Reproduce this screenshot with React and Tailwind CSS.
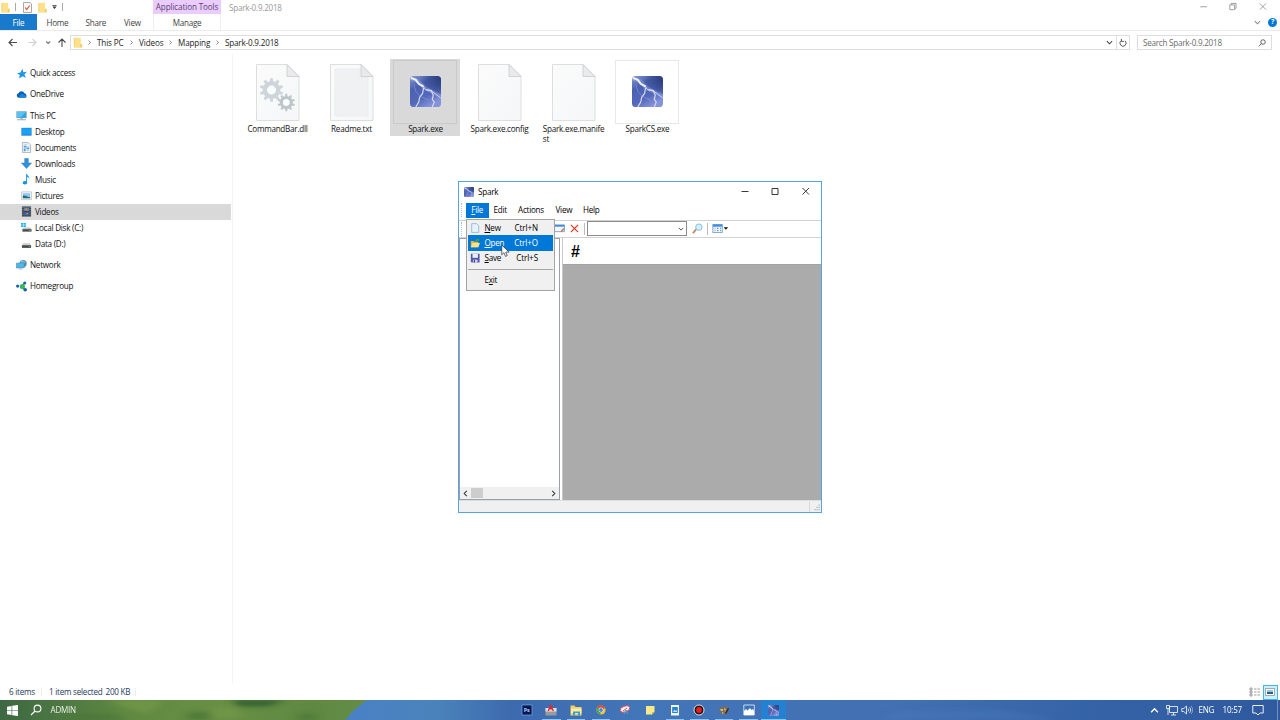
import clsx from 'clsx';

function Folder({ className }) {
  return (
    <svg viewBox="0 0 10 12" className={clsx('shrink-0', className)}>
      <path d="M.5 1h7v6.500h2v4H.5z" fill="#f6d87c" />
      <path d="M1 .8h6.800v10.400H1z" fill="#fee08a" />
      <path d="M8 7.500h1.400v3.700H7.400z" fill="#efca66" />
      <path d="M1 .8v10.400" stroke="#edc964" strokeWidth=".5" />
    </svg>
  );
}

function Chevron({ className, dir = 'down' }) {
  const paths = { down: 'M1 2.5 4 5.5 7 2.5', right: 'M2.5 1 5.5 4 2.5 7', left: 'M5.5 1 2.5 4 5.5 7', up: 'M1 5.5 4 2.5 7 5.5' };
  return (
    <svg viewBox="0 0 8 8" className={clsx('shrink-0', className)} fill="none" stroke="currentColor" strokeWidth="1.2">
      <path d={paths[dir]} />
    </svg>
  );
}

function Search({ className }) {
  return (
    <svg viewBox="0 0 12 12" className={clsx('shrink-0', className)} fill="none" stroke="currentColor" strokeWidth="1.1">
      <circle cx="7.5" cy="4.5" r="3.4" />
      <path d="M5.1 7 1 11" />
    </svg>
  );
}

function SparkIcon({ className }) {
  return (
    <svg viewBox="0 0 32 32" className={clsx('shrink-0', className)}>
      <defs>
        <linearGradient id="sparkBg" x1="0" y1="0" x2=".6" y2="1">
          <stop offset="0" stopColor="#8698d2" />
          <stop offset=".35" stopColor="#4b61ae" />
          <stop offset=".7" stopColor="#5468ba" />
          <stop offset="1" stopColor="#8593da" />
        </linearGradient>
        <radialGradient id="sparkDark" cx="1" cy=".1" r=".65">
          <stop offset="0" stopColor="#2a3d7c" />
          <stop offset="1" stopColor="#2a3d7c" stopOpacity="0" />
        </radialGradient>
        <clipPath id="sparkClip"><rect width="32" height="32" rx="4" /></clipPath>
      </defs>
      <g clipPath="url(#sparkClip)" fill="none">
        <path d="M0 0h32v32H0z" fill="url(#sparkBg)" />
        <path d="M0 0h32v32H0z" fill="url(#sparkDark)" />
        <path d="m0 2 8 3 8 8 16 8" stroke="#a9baf0" strokeWidth="4" opacity=".35" />
        <path d="m1 2 5 2 3 4 5 3 2 3 7 2 4 3 5 4" stroke="#c9d4fa" strokeWidth="1" />
        <path d="m1 2 5 2 3 4 5 3" stroke="#eef2ff" strokeWidth="2" />
        <path d="m14 12-1 6-3 4-1 5-3 5M17 14l5 1 2 5-1 4 2 3-2 5" stroke="#d6dcfb" strokeWidth="1.2" />
        <path d="m4 9 2 7 5 5 8 4" stroke="#8d9fe0" strokeWidth=".6" />
      </g>
    </svg>
  );
}

const TEETH = [0, 36, 72, 108, 144, 180, 216, 252, 288, 324];

function Gear({ x, y, s, color }) {
  return (
    <g transform={`translate(${x} ${y}) scale(${s})`}>
      {TEETH.map((a) => (
        <path key={a} d="M-1.7-8.5-1.3-12h2.6l.4 3.5z" fill={color} transform={`rotate(${a})`} />
      ))}
      <circle r="6.8" fill="none" stroke={color} strokeWidth="4.6" />
      <circle r="4.4" fill="#fbfcfc" />
    </g>
  );
}

function FilePage({ kind }) {
  return (
    <svg viewBox="0 0 44 57" className="ml-px mt-px h-[57px] w-[44px]">
      <defs>
        <linearGradient id="page" x1="0" y1="0" x2="1" y2="1">
          <stop offset="0" stopColor="#fbfbfb" />
          <stop offset="1" stopColor="#f5f7f8" />
        </linearGradient>
      </defs>
      <path d="M.5.5H31L43 12.500V56.500H.5z" fill="url(#page)" stroke="#d5d6d7" strokeWidth=".8" />
      {kind === 'text' && <path d="M5 5h25v8h8v39H5z" fill="#eff1f2" stroke="#e3e5e6" strokeWidth=".5" />}
      <path d="M31 .5v12h12z" fill="#e9eaeb" stroke="#cbcccd" strokeWidth=".8" />
      {kind === 'gears' && (
        <>
          <Gear x={15.5} y={26} s={0.98} color="#cdd5da" />
          <Gear x={30.3} y={38.5} s={0.72} color="#bcc6cb" />
        </>
      )}
    </svg>
  );
}

const navIcons = {
  star: <path d="m7 .8 1.100 3.700 3.800-.5-2.700 3 1.600 3.800-3.500-1.800L3.400 11.500l.7-3.900-3-2 3.700-.6z" fill="#2196e8" />,
  cloud: (
    <>
      <path d="M3 9.500a2.500 2.500 0 0 1-.3-4.900A3.600 3.600 0 0 1 9.300 4.600 2.500 2.500 0 0 1 9.500 9.500z" fill="#0a61b9" />
      <path d="M5 9.600a2.200 2.200 0 0 1 1-4c1.600-.5 2.500.6 3 1.400 1.500-.4 2.500.6 2.400 2.600z" fill="#1687d9" />
    </>
  ),
  pc: (
    <>
      <path d="M.5 1.500h11v7.300H.5z" fill="#6b8ea3" />
      <path d="M1 2h10v6.200H1z" fill="#59c2f5" />
      <path d="M11 2v6.200H5z" fill="#2da4e5" />
      <path d="M4.500 9h3v1h-3zM1 10h10v1.200H1z" fill="#a4b0b8" />
    </>
  ),
  desktop: (
    <>
      <path d="M.5 2h11v8.500H.5z" fill="#1576c6" />
      <path d="M1 2.500h10v7H1z" fill="#19a2f5" />
    </>
  ),
  documents: (
    <>
      <path d="M1.500.5h6.300L10.500 3v8.500h-9z" fill="#f2f5f7" stroke="#8798a3" strokeWidth=".7" />
      <path d="M3 4h3v2H3zM6 6h3v2H6zM3 7h2v3H3z" fill="#519bd0" />
      <path d="M3 2.500h4M7 4.800h2M6 9.300h3" stroke="#95b5cb" strokeWidth=".6" />
    </>
  ),
  downloads: <path d="M4 .5h4v5h3.500L6 11.500.5 5.500H4z" fill="#318fe0" stroke="#2576bd" strokeWidth=".5" />,
  music: (
    <>
      <path d="M5.600 0h1c.2 2 3 2.600 2.700 5.600-.4-1.600-1.500-2-2.700-2.200V9h-1z" fill="#1192ee" />
      <ellipse cx="4.300" cy="9.500" rx="2.500" ry="1.900" fill="#1192ee" />
    </>
  ),
  pictures: (
    <>
      <path d="M.5 2h11v8.500H.5z" fill="#f4f6f7" stroke="#a1abb2" strokeWidth=".6" />
      <path d="M2 3.500h8v5.500H2z" fill="#8bcaf3" />
      <path d="M2 9V6l3 .3 3 1.200 2 .2V9z" fill="#2f6673" />
    </>
  ),
  videos: (
    <>
      <path d="M1 .5h10v11H1z" fill="#3b3e43" />
      <path d="M3 1.500h6v4H3z" fill="#4a82c5" />
      <path d="M3 6.500h6v4H3z" fill="#3261a5" />
      <path d="m4 4 2-2 2 3H5zM5 9l2-2 1 2z" fill="#d38244" />
      <path d="M2 1.200v10M10 1.200v10" stroke="#b7babf" strokeWidth=".8" strokeDasharray="1 1" />
    </>
  ),
  diskC: (
    <>
      <path d="M0 1h2.300v2H0zm2.800 0h2.500v2H2.800zM0 3.500h2.300v2H0zm2.800 0h2.500v2H2.800z" fill="#1cb2ee" />
      <path d="m3 6-1.500 2h10L10 6z" fill="#c4c6c8" />
      <path d="M1.500 7.800h10v2.700h-10z" fill="#484b4d" />
      <path d="M9 9h1.500v.7H9z" fill="#69d67b" />
    </>
  ),
  diskD: (
    <>
      <path d="M2.500 5.500 1 8h10L9.500 5.500z" fill="#d2d4d5" />
      <path d="M1 7.800h10v3H1z" fill="#494b4d" />
      <path d="M8.500 9.100H10v.7H8.500z" fill="#69d67b" />
    </>
  ),
  network: (
    <>
      <circle cx="7.800" cy="5" r="3.900" fill="#4f8fb0" />
      <path d="M5 2.500c2-2 4 0 5.500 1l-2 2-3-1z" fill="#7cc1da" />
      <path d="m.5 4.500 8.500-.5v5.500l-8.500.3z" fill="#4ab9ee" stroke="#4d7793" strokeWidth=".6" />
      <path d="M3 10.500h4v.8H3z" fill="#83a0b1" />
    </>
  ),
  homegroup: (
    <>
      <path d="m4 6 5-4v8z" fill="#2ebc58" />
      <circle cx="7" cy="6" r="2.800" fill="#37b75a" />
      <circle cx="1.800" cy="5.500" r="1.800" fill="#1d67b2" />
      <circle cx="9.500" cy="2.200" r="1.700" fill="#1c5da8" />
      <circle cx="10" cy="9.500" r="2" fill="#1760a9" />
    </>
  ),
};

const nav = [
  { icon: 'star', label: 'Quick access', cls: 'pl-4' },
  { icon: 'cloud', label: 'OneDrive', cls: 'pl-4 mt-[5.300px]' },
  { icon: 'pc', label: 'This PC', cls: 'pl-4 mt-[5.300px]' },
  { icon: 'desktop', label: 'Desktop', cls: 'pl-[21px]' },
  { icon: 'documents', label: 'Documents', cls: 'pl-[21px]' },
  { icon: 'downloads', label: 'Downloads', cls: 'pl-[21px]' },
  { icon: 'music', label: 'Music', cls: 'pl-[21px]' },
  { icon: 'pictures', label: 'Pictures', cls: 'pl-[21px]' },
  { icon: 'videos', label: 'Videos', cls: 'pl-[21px] bg-[#d9d9d9]' },
  { icon: 'diskC', label: 'Local Disk (C:)', cls: 'pl-[21px]' },
  { icon: 'diskD', label: 'Data (D:)', cls: 'pl-[21px]' },
  { icon: 'network', label: 'Network', cls: 'pl-4 mt-[5.300px]' },
  { icon: 'homegroup', label: 'Homegroup', cls: 'pl-4 mt-[5.300px]' },
];

function TitleBar() {
  return (
    <header className="flex h-[31px] border-b border-[#ebebeb]">
      <div className="flex w-[153px] flex-col">
        <div className="flex h-[15px] items-center">
          <Folder className="ml-px h-[11px] w-[9px]" />
          <i className="ml-[5px] h-2 w-px bg-[#aaa]" />
          <svg viewBox="0 0 9 11" className="ml-[7px] h-[11px] w-[9px]">
            <path d="M.5.500H7L8.500 2v8.500h-8z" fill="#f8f8f8" stroke="#969696" strokeWidth=".8" />
            <path d="m2.200 5.500 1.500 2 3-4" fill="none" stroke="#dc572c" strokeWidth="1.200" />
          </svg>
          <Folder className="ml-[6px] h-[11px] w-[9px]" />
          <svg viewBox="0 0 6 6" className="ml-[5px] h-[6px] w-[5px]">
            <path d="M.5.500h5v1h-5zM.5 2.500h5L3 5.500z" fill="#333" />
          </svg>
          <i className="ml-[4.500px] h-2 w-px bg-[#aaa]" />
        </div>
        <nav className="flex h-4 items-center">
          <span className="flex h-4 w-[37px] items-center justify-center bg-[#1979ca] pt-px text-white">File</span>
          <span className="ml-[9.500px] w-[39px] pt-px text-[#444]">Home</span>
          <span className="w-[38.500px] pt-px text-[#444]">Share</span>
          <span className="pt-px text-[#444]">View</span>
        </nav>
      </div>
      <div className="flex w-[68px] flex-col border-x border-[#eee] text-center">
        <span className="-mx-px h-[15px] bg-[#eaccff] leading-[13.500px] tracking-[-0.120px] text-[#5c436d]">Application Tools</span>
        <span className="pt-px leading-[15px] text-[#444]">Manage</span>
      </div>
      <div className="ml-2 flex-1 leading-[15px] text-[#999]">Spark-0.9.2018</div>
      <div className="flex w-[84px] flex-col text-[#888]">
        <svg viewBox="0 0 84 15" className="h-[15px] w-[84px]" fill="none" stroke="currentColor" strokeWidth=".8">
          <path d="M3 7h7M64.500 3.500l6.500 6.500M71 3.500 64.500 10M33.500 5h5v5h-5zM35 5V3.500h5v5h-1.500" />
        </svg>
        <div className="flex h-4 items-center justify-end gap-[7px] pr-[3px]">
          <Chevron className="h-[7px] w-[7px]" />
          <span className="flex h-[9px] w-[9px] items-center justify-center rounded-full bg-[#0078d7] text-[7px] font-bold text-white">?</span>
        </div>
      </div>
    </header>
  );
}

function AddressBar() {
  return (
    <div className="flex h-[23px] items-center text-[#222]">
      <svg viewBox="0 0 70 16" className="h-4 w-[70px]" fill="none" strokeWidth="1.100">
        <path d="M17 7.500H9.500M12.500 4 9 7.500l3.500 3.500M58.500 7.500 62 4l3.500 3.500M62 4v8" stroke="#4b4b4b" />
        <path d="M28.500 7.500H36M32.500 4 36 7.500l-3.500 3.500" stroke="#d1d1d1" />
        <path d="m46.200 6.500 2 2 2-2" stroke="#777" />
      </svg>
      <div className="flex h-[15px] w-[1060px] items-center border border-[#dedede] tracking-[-0.120px]">
        <Folder className="ml-[2px] h-[11px] w-[10px]" />
        <Chevron dir="right" className="ml-[4px] mr-[5px] h-[5px] w-[5px] text-[#555]" />
        <span className="w-[32px]">This PC</span>
        <Chevron dir="right" className="mr-[5px] h-[5px] w-[5px] text-[#555]" />
        <span className="w-[28.500px]">Videos</span>
        <Chevron dir="right" className="mr-[5.500px] h-[5px] w-[5px] text-[#555]" />
        <span className="w-[37px]">Mapping</span>
        <Chevron dir="right" className="mr-[5px] h-[5px] w-[5px] text-[#555]" />
        <span className="flex-1 tracking-[-0.180px]">Spark-0.9.2018</span>
        <Chevron className="mr-[2.500px] h-[7px] w-[7px] text-[#444]" />
        <span className="flex h-full w-[13.500px] items-center justify-center border-l border-[#dedede]">
          <svg viewBox="0 0 10 10" className="h-[8px] w-[8px]" fill="none" stroke="#555" strokeWidth="1.200">
            <path d="M7.500 2.300A3.800 3.800 0 1 1 3 2M3 0v3h3" />
          </svg>
        </span>
      </div>
      <div className="ml-[7px] flex h-[15px] w-[135px] items-center justify-between border border-[#dedede] pl-[5px] pr-[5px] text-[#6b6b6b]">
        <span>Search Spark-0.9.2018</span>
        <Search className="h-[8px] w-[8px] text-[#333]" />
      </div>
    </div>
  );
}

function Sidebar() {
  return (
    <aside className="mr-px w-[231px] pt-[11px]">
      {nav.map((n) => (
        <div key={n.label} className={clsx('flex h-4 items-center', n.cls)}>
          <svg viewBox="0 0 12 12" className="h-[11px] w-[11px] shrink-0">{navIcons[n.icon]}</svg>
          <span className="ml-[3px] leading-[11px] pb-px">{n.label}</span>
        </div>
      ))}
    </aside>
  );
}

const files = [
  { name: 'CommandBar.dll', kind: 'gears' },
  { name: 'Readme.txt', kind: 'text' },
  { name: 'Spark.exe', kind: 'exe', selected: true },
  { name: 'Spark.exe.config', kind: 'plain' },
  { name: 'Spark.exe.manifest', kind: 'plain' },
  { name: 'SparkCS.exe', kind: 'exe' },
];

function Files() {
  return (
    <main className="flex flex-1 items-start gap-[4px] border-l border-[#f4f4f4] pl-[9px] pt-[4.500px]">
      {files.map((f) => (
        <div key={f.name} className={clsx('flex min-h-[77px] w-[70px] flex-col items-center', f.selected && 'bg-[#d9d9d9]')}>
          <div className={clsx('mt-px flex h-[64px] w-[64px] items-center justify-center', f.kind === 'exe' && 'border', f.selected ? 'border-[#cacaca]' : 'border-[#e8e8e8]')}>
            {f.kind === 'exe' ? <SparkIcon className="h-[31px] w-[31px]" /> : <FilePage kind={f.kind} />}
          </div>
          <div className="flex w-[60px] justify-center pl-px leading-[10px]">
            {f.name === 'Spark.exe.manifest' ? <p className="text-left">Spark.exe.manife<br />st</p> : <span>{f.name}</span>}
          </div>
        </div>
      ))}
    </main>
  );
}

function StatusBar() {
  return (
    <footer className="flex h-4 items-center pl-[9px] text-[#1e395b]">
      <span className="w-[32px]">6 items</span>
      <i className="mr-[7px] h-2 w-px bg-[#eee]" />
      <span className="w-[56.500px]">1 item selected</span>
      <span className="w-[29px]">200 KB</span>
      <i className="h-2 w-px bg-[#eee]" />
      <span className="flex-1" />
      <svg viewBox="0 0 12 10" className="mr-[2px] h-[10px] w-[12px]" fill="none" stroke="#858585" strokeWidth=".8">
        <path d="M1 1h2v2H1zM1 4h2v2H1zM1 7h2v2H1z" />
        <path d="M5 2h6M5 5h6M5 8h6" strokeDasharray="2.500 1" />
      </svg>
      <span className="mr-[2.500px] flex h-[15px] w-[14.500px] items-center justify-center border border-[#42b6e7] bg-[#cceffd]">
        <svg viewBox="0 0 10 8" className="h-[8px] w-[10px]">
          <path d="M.5.500h9v7h-9z" fill="#fff" stroke="#888" strokeWidth=".7" />
          <path d="M2 2h6v2H2z" fill="#8bc7ef" />
          <path d="M2 4h6v2H2z" fill="#2e5e72" />
        </svg>
      </span>
    </footer>
  );
}

const menuItems = [
  { key: 'N', rest: 'ew', shortcut: 'Ctrl+N' },
  { key: 'O', rest: 'pen', shortcut: 'Ctrl+O', active: true },
  { key: 'S', rest: 'ave', shortcut: 'Ctrl+S' },
];

const menuIcons = {
  N: <path d="M2 .8h6L10.500 3.300v8H2z" fill="#e6f3ff" stroke="#7d9fc3" strokeWidth=".8" />,
  O: (
    <>
      <path d="M1 3.500h3l1 1h5v6.500H1z" fill="#e5b743" />
      <path d="M3 6h9l-2 5H1z" fill="#fbe28b" />
      <path d="M6 3.500c.5-2 2-2.300 3.500-2V.3l2 2-2 2V3C8 2.800 7.500 3.500 7 4.500z" fill="#4ca53e" />
    </>
  ),
  S: (
    <>
      <path d="M1 1h10.500v10.500H2L1 10.500z" fill="#5258a9" />
      <path d="M3 1h6.500v4.800H3z" fill="#ecedfa" />
      <path d="M3.500 8h5.500v3.500H3.500z" fill="#d0d2e8" />
      <path d="M4.500 8.500H6v3H4.500z" fill="#42488f" />
    </>
  ),
};

function FileMenu() {
  return (
    <div className="absolute left-[7px] top-[36.500px] flex h-[72px] w-[89px] flex-col border border-[#a3a3a3] bg-[#f0f0f0] pt-[.500px] text-black">
      {menuItems.map((m) => (
        <div key={m.key} className={clsx('mx-px flex h-[15.300px] items-center pl-[2px]', m.active && 'bg-[#0078d7] text-white')}>
          <svg viewBox="0 0 12 12" className="h-[10px] w-[10px]">{menuIcons[m.key]}</svg>
          <span className="ml-[4.500px] w-[30px]"><u>{m.key}</u>{m.rest}</span>
          <span className="flex-1 pr-[15px] text-right tracking-[-0.100px]">{m.shortcut}</span>
        </div>
      ))}
      <hr className="mx-px mb-[3.500px] mt-[3px] border-[#a7a7a7]" />
      <div className="flex h-[14px] items-center pl-[17.500px]"><span>E<u>x</u>it</span></div>
      <svg viewBox="0 0 12 18" className="absolute left-[33.500px] top-[24px] h-[14px] w-[9px]">
        <path d="M1 1v13l3-2.800 2 5 2.300-1-2-4.700h4.500z" fill="#fff" stroke="#222" strokeWidth=".9" />
      </svg>
    </div>
  );
}

function SparkWindow() {
  return (
    <section className="absolute left-[458px] top-[181px] flex h-[332px] w-[364px] flex-col border border-[#55a5e4] bg-white text-black">
      <div className="flex h-[19px] items-center pl-[5px]">
        <SparkIcon className="h-[10px] w-[10px]" />
        <span className="ml-[4px] flex-1">Spark</span>
        <svg viewBox="0 0 80 19" className="h-[19px] w-[80px]" fill="none" stroke="#222" strokeWidth=".9">
          <path d="M.5 9.500H7.500M31 6.500h6v6h-6zM61.500 6l6.500 6.500M68 6 61.500 12.500" />
        </svg>
      </div>
      <div className="flex h-[18.500px] items-center">
        <i className="ml-[2px] h-[14px] border-l border-dotted border-[#bbb]" />
        <span className="ml-[4px] flex h-[15px] w-[22.500px] items-center justify-center bg-[#0078d7] text-white"><span><u>F</u>ile</span></span>
        <span className="ml-[5px] w-[24.500px]">Edit</span>
        <span className="w-[37.500px]">Actions</span>
        <span className="w-[27.500px]">View</span>
        <span>Help</span>
      </div>
      <div className="flex h-[18.500px] items-center border-y border-[#d2d2d2]">
        <i className="ml-[2px] h-[14px] border-l border-dotted border-[#bbb]" />
        <svg viewBox="0 0 12 10" className="ml-[92px] h-[9px] w-[11px]">
          <path d="M.5 1h11v7.500H.5z" fill="#f4f8fd" stroke="#5d87b9" strokeWidth=".8" />
          <path d="M.5 1h11v2H.5z" fill="#458ad6" />
          <path d="m7 8 3.500-3.500 1 1L8.500 9z" fill="#b27852" />
        </svg>
        <svg viewBox="0 0 10 10" className="ml-[5px] h-[9px] w-[9px]" fill="none" stroke="#df3a20" strokeWidth="1.400">
          <path d="m1 1 8 8M9 1 1 9" />
        </svg>
        <i className="ml-[5px] h-[12px] w-px bg-[#bbb]" />
        <div className="ml-[2px] flex h-[15px] w-[100px] items-center justify-end border border-[#8c8c8c] pr-[2px]">
          <Chevron className="h-[6px] w-[6px] text-[#444]" />
        </div>
        <svg viewBox="0 0 12 12" className="ml-[5px] h-[11px] w-[11px]">
          <path d="M5 6.500 1 11" stroke="#c77e4d" strokeWidth="1.800" />
          <circle cx="7.500" cy="4.500" r="3.500" fill="#d2f1fd" stroke="#82b9dc" />
        </svg>
        <i className="ml-[3.500px] h-[12px] w-px bg-[#bbb]" />
        <svg viewBox="0 0 18 10" className="ml-[4.500px] h-[9px] w-[17px]">
          <path d="M.5.500h10.500v9H.5z" fill="#eff7ff" stroke="#458ad0" strokeWidth=".8" />
          <path d="M.5.500h10.500v2.500H.5z" fill="#3f8ee0" />
          <path d="M3 4v5" stroke="#e68743" strokeDasharray="1.500 1" />
          <path d="M6 4v5" stroke="#425b9b" strokeDasharray="1.500 1" />
          <path d="M9 4v5" stroke="#52a55a" strokeDasharray="1.500 1" />
          <path d="M12.500 3.500h5L15 6.500z" fill="#111" />
        </svg>
      </div>
      <div className="flex min-h-0 flex-1">
        <div className="flex w-[101px] flex-col justify-end border border-[#9aa0a8]">
          <div className="flex h-[12px] items-center bg-[#f0f0f0]">
            <Chevron dir="left" className="ml-[2px] h-[7px] w-[7px] text-[#333]" />
            <i className="ml-[2px] h-[10px] w-[12px] bg-[#cdcdcd]" />
            <span className="flex-1" />
            <Chevron dir="right" className="mr-[2px] h-[7px] w-[7px] text-[#333]" />
          </div>
        </div>
        <div className="ml-[2px] flex flex-1 flex-col border-l border-[#c8c8c8]">
          <div className="h-[26px] pl-[8px] font-['Liberation_Sans'] text-[16px] font-bold leading-[28px]">#</div>
          <div className="flex-1 border-t border-[#a2a2a2] bg-[#ababab]" />
        </div>
      </div>
      <div className="flex h-[12px] items-center justify-end border-t border-[#ddd] bg-[#f0f0f0]">
        <i className="h-[10px] w-px bg-[#d8d8d8]" />
        <svg viewBox="0 0 11 10" className="h-[10px] w-[11px]" fill="#b4b4b4">
          <path d="M8.500 2.500h1.300v1.300H8.500zM6.500 4.800h1.300v1.300H6.500zM8.500 4.800h1.300v1.300H8.500zM4.500 7h1.300v1.300H4.500zM6.500 7h1.300v1.300H6.500zM8.500 7h1.300v1.300H8.500z" />
        </svg>
      </div>
      <FileMenu />
    </section>
  );
}

const apps = [
  {
    id: 'ps',
    art: (
      <>
        <rect x="1" y="1" width="10" height="10" fill="#0b1552" stroke="#6caee6" strokeWidth=".7" />
        <text x="2.800" y="8.200" fontSize="5.500" fontWeight="700" fill="#a9ceff">Ps</text>
      </>
    ),
  },
  {
    id: 'acad',
    open: true,
    art: (
      <>
        <path d="M.5 4h11v7.500H.5z" fill="#9a9b9c" />
        <path d="M.5 4h11v3.500H.5z" fill="#dedede" />
        <path d="m2.500 7 2.800-6.500h1L9 7H7.500l-.5-1.500H4.500L4 7z" fill="#df2835" />
      </>
    ),
  },
  {
    id: 'explorer',
    open: true,
    art: (
      <>
        <path d="M.5 1.500h4l1 1.500h6v8.500H.5z" fill="#f2cf63" />
        <path d="M1 4.500h10.500v5H1z" fill="#ffec9e" />
        <path d="M3 7.500h7v4H8V9H5v2.500H3z" fill="#349edf" />
      </>
    ),
  },
  {
    id: 'chrome',
    open: true,
    art: (
      <>
        <circle cx="6" cy="6" r="4.600" fill="#f6c72f" />
        <path d="M6 6 2 3.700A4.600 4.600 0 0 1 10.200 4z" fill="#df4938" />
        <path d="M6 6 2 3.700A4.600 4.600 0 0 0 5.500 10.600z" fill="#45a352" />
        <circle cx="6" cy="6" r="2.400" fill="#e9f1fc" />
        <circle cx="6" cy="6" r="1.900" fill="#4285e8" />
      </>
    ),
  },
  {
    id: 'snip',
    art: (
      <>
        <ellipse cx="6" cy="5" rx="5" ry="2.800" fill="#f3eef0" stroke="#d7525c" strokeWidth=".9" transform="rotate(-18 6 5)" />
        <path d="m4 7 4-3" stroke="#d7525c" fill="none" />
        <path d="m6 6 3 4M8 6l-3 4" stroke="#56a3ce" fill="none" />
      </>
    ),
  },
  {
    id: 'notes',
    art: (
      <>
        <path d="M2 2h8.500v6L8 10.500H2z" fill="#f7e98a" />
        <path d="M8 10.500V8h2.500z" fill="#c9b74e" />
      </>
    ),
  },
  {
    id: 'doc',
    open: true,
    art: (
      <>
        <path d="M2 1h8v10.500H2z" fill="#f3f6f8" />
        <path d="M3.200 3h5.600v6H3.200z" fill="#2680cb" />
        <path d="m4 8 1.500-2.500L7 7l1-1v2z" fill="#b9e5fa" />
      </>
    ),
  },
  {
    id: 'record',
    open: true,
    art: (
      <>
        <circle cx="6" cy="6" r="5" fill="#151515" stroke="#f3f3f3" strokeWidth=".9" />
        <circle cx="6" cy="6" r="2.900" fill="#f21a20" />
      </>
    ),
  },
  {
    id: 'gimp',
    open: true,
    art: (
      <>
        <path d="m1 3 2 1 3-2 2 1 2-1 .5 5-2 3-3 .5L2 9z" fill="#7b6d54" />
        <path d="M2 5h3v2H3zM6 4l2 1-1 3zM4 8l2 1-2 1z" fill="#cdb986" />
        <path d="m7 9 3-5 1 1-3 5z" fill="#2b2b27" />
      </>
    ),
  },
  {
    id: 'photos',
    open: true,
    art: (
      <>
        <path d="M.8 1h10.500v10H.8z" fill="#3975bb" stroke="#eff4fb" strokeWidth=".8" />
        <path d="m1 11V7l2-2 1.500 1.500L7 4l1.500 2L10 5l1 2v4z" fill="#fff" />
      </>
    ),
  },
  { id: 'spark', open: true, active: true },
];

function Wallpaper() {
  return (
    <svg viewBox="0 0 1280 20" preserveAspectRatio="none" className="absolute inset-0 h-full w-full">
      <defs>
        <linearGradient id="water">
          <stop offset="0.280" stopColor="#4a81c4" />
          <stop offset="0.340" stopColor="#4a83bb" />
          <stop offset="0.400" stopColor="#3d6aae" />
          <stop offset="0.500" stopColor="#4375b9" />
          <stop offset="0.700" stopColor="#4270b2" />
          <stop offset="0.850" stopColor="#3563a7" />
          <stop offset="1" stopColor="#30599e" />
        </linearGradient>
        <linearGradient id="grass">
          <stop offset="0" stopColor="#3d6843" />
          <stop offset="0.200" stopColor="#507b42" />
          <stop offset="0.350" stopColor="#618a42" />
          <stop offset="0.600" stopColor="#688f44" />
          <stop offset="0.850" stopColor="#5f8943" />
          <stop offset="1" stopColor="#648c48" />
        </linearGradient>
        <filter id="soft" x="-5%" y="-50%" width="110%" height="200%"><feGaussianBlur stdDeviation="5 2.5" /></filter>
      </defs>
      <path d="M0 0h1280v20H0z" fill="url(#water)" />
      <path d="M0 0h367l-13 10-9 10H0z" fill="url(#grass)" />
      <g filter="url(#soft)" opacity=".8">
        <path d="M232 0h54l-18 6h-30z" fill="#234f29" />
        <path d="M80 14h30l20 6H70zM190 12h20v8h-25zM300 14h16v6h-20z" fill="#4a7437" />
        <path d="M106 0h60l-20 14zM210 8h26l8 10h-30z" fill="#72984a" />
        <path d="M900 10h100l60 10H880z" fill="#4a7abc" opacity=".5" />
      </g>
    </svg>
  );
}

function Taskbar() {
  return (
    <div className="relative h-[20px] overflow-hidden text-white">
      <Wallpaper />
      <div className="relative flex h-full items-center">
        <svg viewBox="0 0 12 12" className="ml-[6.500px] h-[11px] w-[11px]" fill="#fff">
          <path d="m0 1.800 5-.8v4.700H0zM5.700.9 12 0v5.700H5.700zM0 6.400h5V11l-5-.8zM5.700 6.400H12V12l-6.300-.9z" />
        </svg>
        <Search className="ml-[12.500px] h-[12px] w-[12px]" />
        <span className="ml-[8.500px] w-[464px] text-[#e8efe4]">ADMIN</span>
        {apps.map((a) => (
          <span key={a.id} className={clsx('relative flex h-full w-[24.670px] shrink-0 items-center justify-center', a.active && 'bg-[#2480d0]')}>
            {a.art ? <svg viewBox="0 0 12 12" className="h-[12px] w-[12px]">{a.art}</svg> : <SparkIcon className="h-[11px] w-[11px]" />}
            {a.open && <i className={clsx('absolute bottom-0 h-px bg-[#8bc3f3]', a.active ? 'w-full' : 'w-[18.500px]')} />}
          </span>
        ))}
        <span className="flex-1" />
        <Chevron dir="up" className="h-[9px] w-[9px]" />
        <svg viewBox="0 0 12 12" className="ml-[6.500px] h-[12px] w-[12px]" fill="none" stroke="#fff" strokeWidth=".8">
          <path d="M3.500 2.500h8v6h-8zM7.500 8.500V11M5 11h5M.5 1.500h3v3h-3zM2 4.500V11" />
        </svg>
        <svg viewBox="0 0 12 12" className="ml-[3px] h-[12px] w-[12px]" fill="none" stroke="#fff" strokeWidth=".8">
          <path d="M.8 4.500h2L5.500 2v8L2.800 7.500h-2zM7 4.500c.8 1 .8 2 0 3M8.500 3.200c1.600 1.700 1.600 4 0 5.600" />
          <path d="M10 2c2.200 2.500 2.200 5.500 0 8" opacity=".5" />
        </svg>
        <span className="ml-[6px] w-[24px]">ENG</span>
        <span className="w-[29.500px]">10:57</span>
        <svg viewBox="0 0 12 12" className="h-[12px] w-[12px]" fill="none" stroke="#fff" strokeWidth=".9">
          <path d="M.8 1.500h10.400v7.500H8L6 11 4 9H.8z" />
        </svg>
        <i className="ml-[13px] mr-[2px] h-full w-px bg-[#7492bf]" />
      </div>
    </div>
  );
}

export default function App() {
  return (
    <div className="relative flex h-[720px] w-[1280px] flex-col overflow-hidden whitespace-nowrap bg-white font-['Open_Sans','Noto_Sans',sans-serif] text-[8.100px] leading-[12px] tracking-[-0.240px] text-[#111]">
      <TitleBar />
      <AddressBar />
      <div className="flex min-h-0 flex-1">
        <Sidebar />
        <Files />
      </div>
      <StatusBar />
      <Taskbar />
      <SparkWindow />
    </div>
  );
}
